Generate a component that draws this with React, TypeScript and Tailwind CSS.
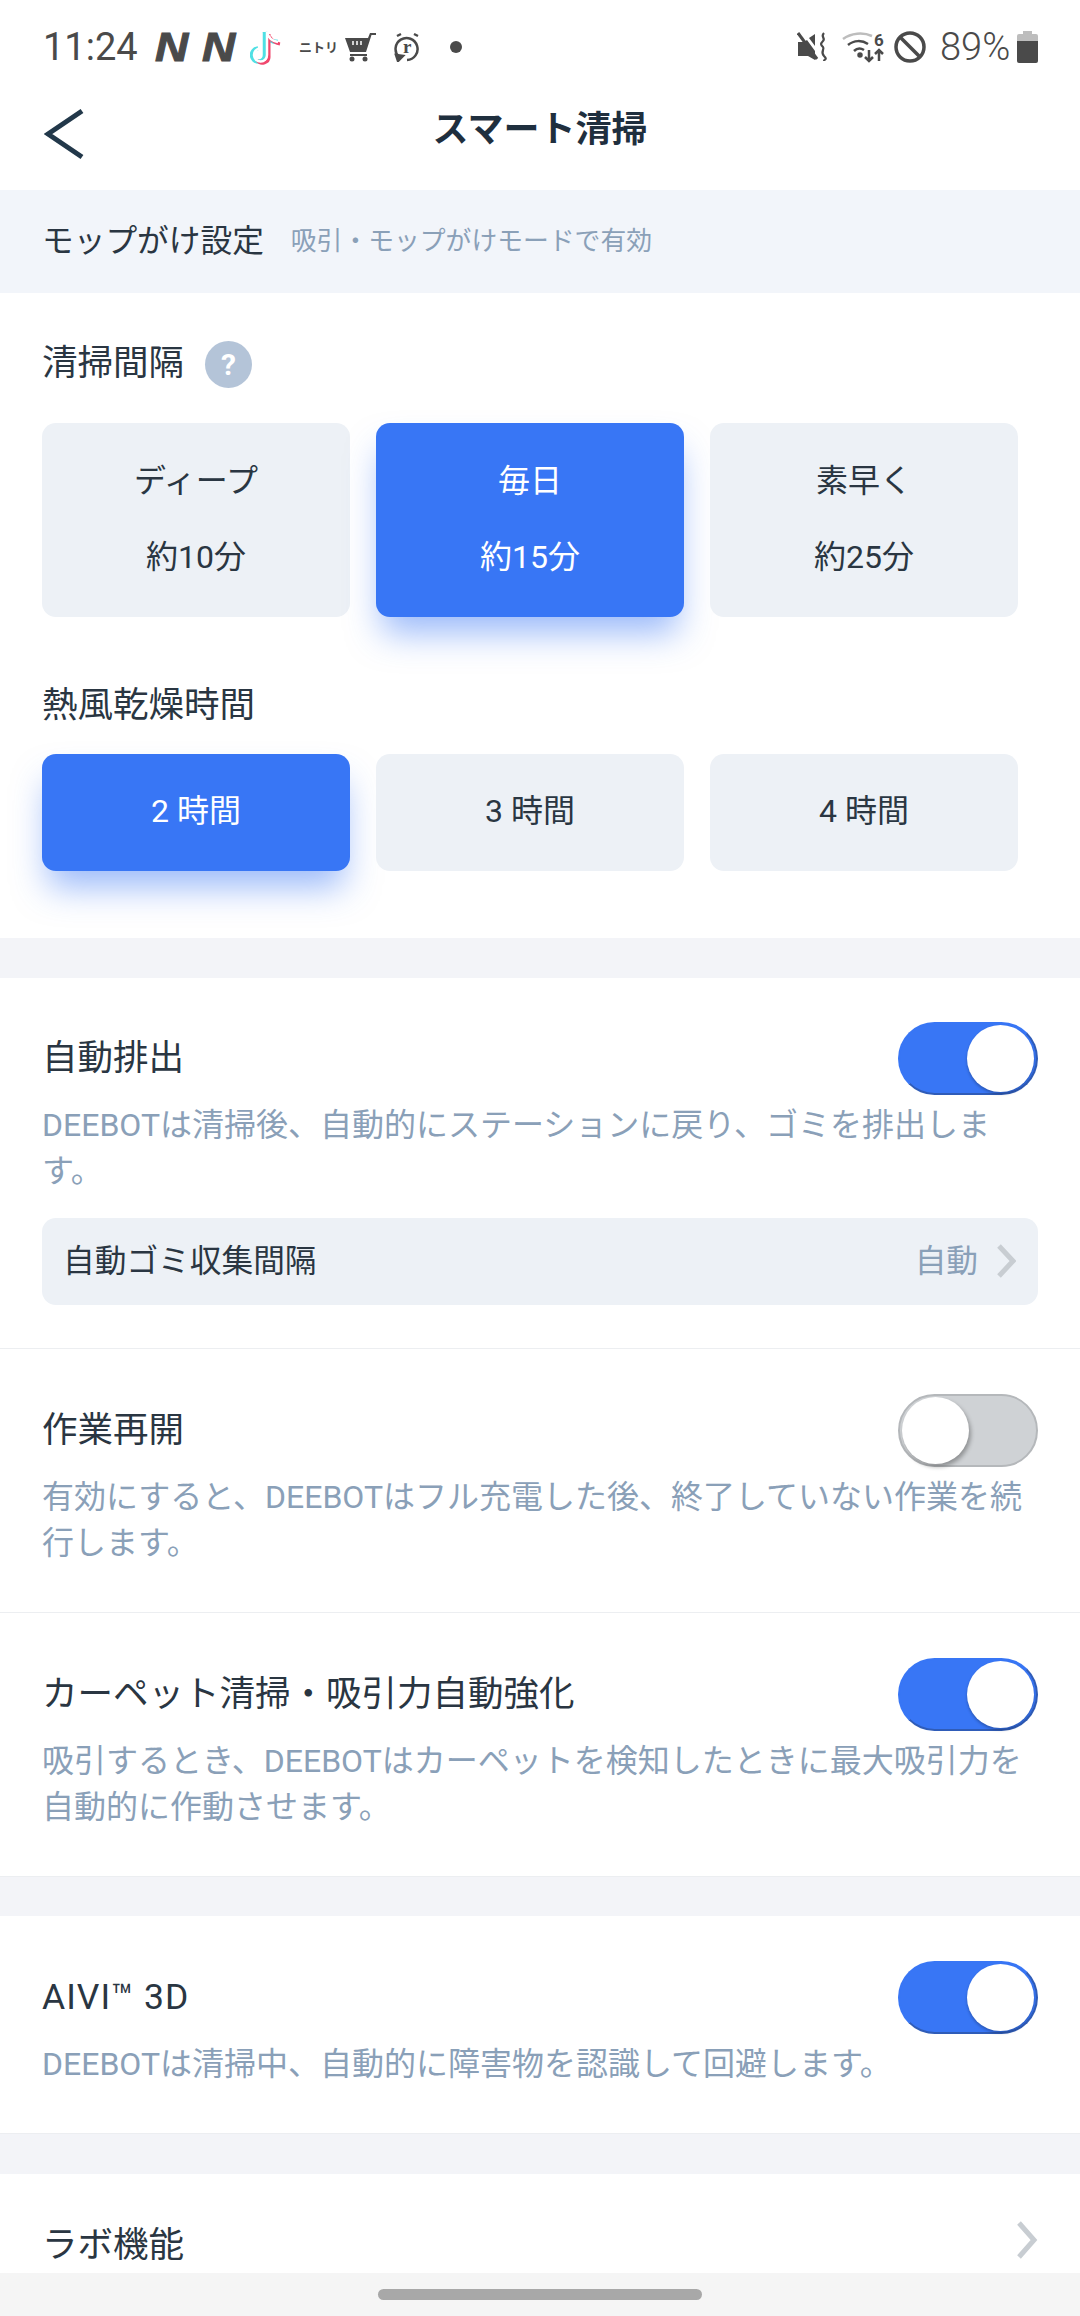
const FONT = "font-['Roboto','Noto_Sans_CJK_JP',sans-serif]";

function StatusBar() {
  return (
    <div className="flex h-[94px] items-center justify-between pl-[43px] pr-[42px] text-[#4a4a4a]">
      <div className="flex items-center">
        <span className="w-[112px] text-[38px] leading-none">11:24</span>
        <span className="w-[47px] origin-left scale-x-[1.15] font-['Liberation_Sans'] text-[40px] leading-none font-bold italic [-webkit-text-stroke:1px_#4a4a4a]">N</span>
        <span className="w-[48px] origin-left scale-x-[1.15] font-['Liberation_Sans'] text-[40px] leading-none font-bold italic [-webkit-text-stroke:1px_#4a4a4a]">N</span>
        <svg width="32" height="37" viewBox="0 0 32 37" fill="none" strokeWidth="4.500">
          <path d="M15 3v23a6.500 6.500 0 1 1-7-6.500" stroke="#4fe0e4" />
          <path d="M15 3c1 6 6 10 13 10" stroke="#4fe0e4" />
          <path d="M19 5v22a6.500 6.500 0 0 1-12 4M20 8c2 4 5 6 10 7" stroke="#f0476d" strokeWidth="3" />
          <path d="M17 3v23a6.500 6.500 0 1 1-7-6.500M17 3c1 5 5 9 11 10" stroke="#ffffff" strokeWidth="2.500" />
        </svg>
        <span className="ml-[17px] w-[33px] text-[13px] leading-none font-bold whitespace-nowrap">ニトリ</span>
        <svg className="ml-[12px]" width="32" height="30" viewBox="0 0 32 30" fill="currentColor">
          <path d="M1 6h23l2-5h6v2h-4.500l-5.500 17H6z" />
          <path d="M9 9v4M13 9v4M17 9v4" stroke="#fff" strokeWidth="1.500" />
          <path d="M6 22h17v2H6z" />
          <circle cx="8" cy="27" r="2.500" />
          <circle cx="21" cy="27" r="2.500" />
        </svg>
        <svg className="ml-[18px]" width="27" height="30" viewBox="0 0 27 30" fill="none" stroke="currentColor" strokeWidth="2.500">
          <path d="M5 25a11 11 0 1 1 8 3" />
          <path d="M2 23l7 1-5 5z" fill="currentColor" />
          <path d="M3 4l4-2M24 4l-4-2" />
          <text x="9" y="21" fontFamily="Liberation Serif" fontSize="19" fontWeight="700" fill="currentColor" stroke="none">r</text>
        </svg>
        <span className="ml-[29px] size-[12px] rounded-full bg-[#4a4a4a]" />
      </div>
      <div className="flex items-center">
        <svg width="30" height="32" viewBox="0 0 30 32" fill="currentColor">
          <path d="M1 11h6l3-2 8 11v9l-7-4H1z" />
          <path d="M12 7l6-4v12z" />
          <path d="M1 2l19 26" stroke="currentColor" strokeWidth="3" />
          <path d="M27 2c-4 4 2 5-1 8s-2 4 0 6-3 5 1 9 0 3 0 5" fill="none" stroke="currentColor" strokeWidth="2.200" />
        </svg>
        <svg className="ml-[15px] overflow-visible" width="43" height="34" viewBox="0 0 43 34" fill="none" stroke="currentColor" strokeWidth="2.500">
          <path d="M1 9c8-6 20-7 29-3" stroke="#bdbdbd" />
          <path d="M6 15c6-5 14-5 20-1" />
          <path d="M12 21c3-3 7-3 10-1" />
          <circle cx="18" cy="25" r="1.500" fill="currentColor" />
          <path d="M27 20v11M23 27l4 4 4-4" />
          <text x="32" y="16" fontFamily="Roboto" fontSize="17" fontWeight="700" fill="currentColor" stroke="none">6</text>
          <path d="M37 20v11M33 24l4-4 4 4" />
        </svg>
        <svg className="ml-[9px]" width="32" height="32" viewBox="0 0 32 32" fill="none" stroke="currentColor" strokeWidth="3.500">
          <circle cx="16" cy="16" r="14" />
          <path d="M6 6l20 20" />
        </svg>
        <span className="ml-[14px] w-[77px] text-[38px] leading-none font-light">89%</span>
        <svg width="21" height="32" viewBox="0 0 21 32">
          <path d="M6 0h9v3h4a2 2 0 0 1 2 2v5H0V5a2 2 0 0 1 2-2h4z" fill="#bdbdbd" />
          <path d="M0 10h21v20a2 2 0 0 1-2 2H2a2 2 0 0 1-2-2z" fill="#4a4a4a" />
        </svg>
      </div>
    </div>
  );
}

function Choice({ active, lines }: { active?: boolean; lines: string[] }) {
  return (
    <div
      className={`flex w-[308px] flex-col items-center justify-center gap-[30px] rounded-[14px] pb-[3px] text-[32px] leading-[46px] ${
        active
          ? "bg-[#3876f5] text-white shadow-[0_22px_34px_-6px_rgba(56,118,245,0.5)]"
          : "bg-[#edf1f6] text-[#2a3642]"
      }`}
    >
      {lines.map((l) => (
        <span key={l} className="h-[46px]">{l}</span>
      ))}
    </div>
  );
}

function Toggle({ on }: { on?: boolean }) {
  return (
    <div
      className={`flex h-[73px] w-[140px] shrink-0 items-center rounded-full p-[2px] ${
        on ? "justify-end border-2 border-[#3876f5] border-r-[#2f5cb8] border-b-[#2f5cb8] bg-[#3876f5]" : "justify-start border-2 border-[#b5b8bb] bg-[#cfd2d5]"
      }`}
    >
      <span className={`size-[67px] rounded-full bg-white ${on ? "shadow-[0_2px_3px_rgba(0,0,0,0.25)]" : "shadow-[2px_3px_4px_rgba(0,0,0,0.3)]"}`} />
    </div>
  );
}

function Row({ title, on, desc, border, padding = "pt-[45px] pb-[46px]", children }: { title: React.ReactNode; on?: boolean; desc: React.ReactNode; border?: boolean; padding?: string; children?: React.ReactNode }) {
  return (
    <div className={`px-[42px] ${padding} ${border ? "border-b border-[#eceef1]" : ""}`}>
      <div className="flex h-[73px] items-center justify-between text-[35.5px] text-[#2a3642]">
        <span>{title}</span>
        <Toggle on={on} />
      </div>
      <p className="mt-[7px] text-[32px] leading-[46px] whitespace-nowrap text-[#8aa0b8]">{desc}</p>
      {children}
    </div>
  );
}

export default function App() {
  return (
    <div className={`flex h-[2316px] w-[1080px] flex-col overflow-hidden bg-white ${FONT}`}>
      <StatusBar />
      <div className="relative flex h-[96px] items-center justify-center pb-[24px]">
        <svg className="absolute top-[14px] left-[44px]" width="40" height="52" viewBox="0 0 40 52" fill="none" stroke="#22384a" strokeWidth="5">
          <path d="M38 3L4 26l34 23" />
        </svg>
        <span className="text-[36px] font-bold text-[#1f2f3e]">スマート清掃</span>
      </div>

      <div className="flex h-[103px] items-center gap-[27px] bg-[#f2f5fa] px-[42px]">
        <span className="text-[31.7px] text-[#2a3642]">モップがけ設定</span>
        <span className="text-[25.8px] text-[#8aa0b8]">吸引・モップがけモードで有効</span>
      </div>

      <div className="h-[645px] px-[42px]">
        <div className="flex h-[130px] items-center gap-[21px] pt-[12px] text-[35.5px] text-[#2a3642]">
          <span>清掃間隔</span>
          <span className="flex size-[47px] items-center justify-center rounded-full bg-[#b4c4d8] text-[30px] font-bold text-white">?</span>
        </div>
        <div className="flex h-[194px] gap-[26px]">
          <Choice lines={["ディープ", "約10分"]} />
          <Choice active lines={["毎日", "約15分"]} />
          <Choice lines={["素早く", "約25分"]} />
        </div>
        <div className="flex h-[137px] items-end pb-[22px] text-[35.5px] text-[#2a3642]">熱風乾燥時間</div>
        <div className="flex h-[117px] gap-[26px]">
          <Choice active lines={["2 時間"]} />
          <Choice lines={["3 時間"]} />
          <Choice lines={["4 時間"]} />
        </div>
      </div>

      <div className="h-[40px] bg-[#f3f4f8]" />

      <Row
        title="自動排出"
        on
        border
        padding="pt-[44px] pb-[45px]"
        desc={<>DEEBOTは清掃後、自動的にステーションに戻り、ゴミを排出しま<br />す。</>}
      >
        <div className="mt-[24px] -mb-[2px] flex h-[87px] items-center justify-between rounded-[14px] bg-[#edf1f6] pr-[22px] pl-[21px] text-[31.7px] text-[#2a3642]">
          <span>自動ゴミ収集間隔</span>
          <span className="flex items-center gap-[18px] text-[#8aa0b8]">
            自動
            <svg width="20" height="34" viewBox="0 0 20 34" fill="none" stroke="#c8cdd2" strokeWidth="5">
              <path d="M3 2l14 15L3 32" />
            </svg>
          </span>
        </div>
      </Row>
      <Row title="作業再開" border desc={<>有効にすると、DEEBOTはフル充電した後、終了していない作業を続<br />行します。</>} />
      <Row title="カーペット清掃・吸引力自動強化" on desc={<>吸引するとき、DEEBOTはカーペットを検知したときに最大吸引力を<br />自動的に作動させます。</>} />

      <div className="h-[40px] border-t border-[#eceef1] bg-[#f3f4f8]" />

      <Row title={<span className="tracking-[1px]">AIVI™ 3D</span>} on desc="DEEBOTは清掃中、自動的に障害物を認識して回避します。" />

      <div className="h-[41px] border-t border-[#eceef1] bg-[#f3f4f8]" />

      <div className="flex h-[99px] items-end justify-between px-[42px] pb-[1px] text-[35.5px] text-[#2a3642]">
        <span>ラボ機能</span>
        <svg className="mb-[13px]" width="22" height="38" viewBox="0 0 22 38" fill="none" stroke="#c8cdd2" strokeWidth="5">
          <path d="M3 2l15 17L3 36" />
        </svg>
      </div>

      <div className="flex flex-1 justify-center bg-[#f5f5f5] pt-[16px]">
        <span className="h-[11px] w-[324px] rounded-full bg-[#a8a8a8]" />
      </div>
    </div>
  );
}
